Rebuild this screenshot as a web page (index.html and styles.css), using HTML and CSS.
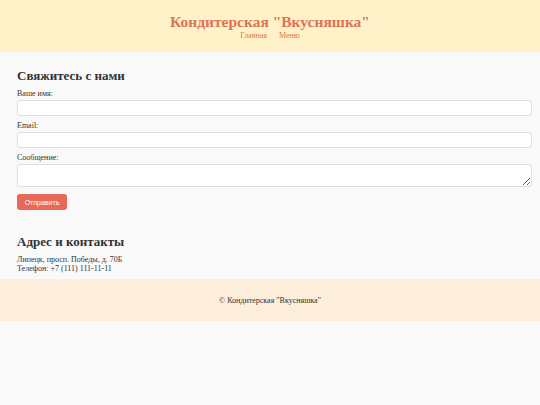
FILE: index.html
```html
<!DOCTYPE html>
<html lang="ru">
<head>
<meta charset="utf-8">
<title>Контакты</title>
<link rel="stylesheet" href="styles.css">
</head>
<body>
<header class="site-header">
  <h1 class="site-title">Кондитерская "Вкусняшка"</h1>
  <nav class="nav">
    <a href="#" class="nav-link">Главная</a>
    <a href="#" class="nav-link">Меню</a>
  </nav>
</header>
<main class="content">
  <section class="contact">
    <h2 class="section-title">Свяжитесь с нами</h2>
    <form class="form">
      <label class="label">Ваше имя:</label>
      <input class="field" type="text">
      <label class="label">Email:</label>
      <input class="field" type="email">
      <label class="label">Сообщение:</label>
      <textarea class="field area"></textarea>
      <button class="btn" type="button">Отправить</button>
    </form>
  </section>
  <section class="address">
    <h2 class="section-title">Адрес и контакты</h2>
    <p class="info">Липецк, просп. Победы, д. 70Б<br>Телефон: +7 (111) 111-11-11</p>
  </section>
</main>
<footer class="site-footer">
  <p class="copy">© Кондитерская "Вкусняшка"</p>
</footer>
</body>
</html>
```
FILE: styles.css
```css
html, body {
  margin: 0;
  padding: 0;
  background: #f9f9f9;
  font-family: "Liberation Serif", "DejaVu Serif", serif;
  color: #333;
}
.site-header {
  background: #fff2c8;
  height: 52px;
  display: flex;
  flex-direction: column;
  align-items: center;
  padding-top: 12px;
  box-sizing: border-box;
}
.site-title {
  margin: 0;
  font-size: 15.5px;
  line-height: 19px;
  color: #e07254;
  font-weight: bold;
}
.nav {
  display: flex;
  gap: 12px;
  line-height: 9px;
}
.nav-link {
  font-size: 8px;
  color: #e07254;
  text-decoration: none;
}
.content {
  padding: 15px 8px 0 17px;
}
.section-title {
  margin: 0 0 5px;
  font-size: 13px;
  line-height: 17px;
  font-weight: bold;
  color: #333;
}
.form {
  display: flex;
  flex-direction: column;
  align-items: flex-start;
}
.label {
  font-size: 8px;
  line-height: 9px;
  margin-bottom: 2px;
  color: #333;
}
.field {
  width: 100%;
  box-sizing: border-box;
  height: 16px;
  border: 1px solid #ddd;
  border-radius: 3px;
  background: #fff;
  margin: 0 0 5px;
  padding: 2px 4px;
  font-family: inherit;
}
.area {
  height: 23px;
  resize: vertical;
  margin-bottom: 7px;
}
.btn {
  width: 50px;
  height: 16px;
  border: none;
  border-radius: 3px;
  background: #e8695a;
  color: #fff;
  font-family: "Liberation Sans", Arial, sans-serif;
  font-size: 7px;
  padding: 0;
}
.address {
  margin-top: 23px;
}
.address .section-title {
  margin-bottom: 5px;
}
.info {
  margin: 0;
  font-size: 8px;
  line-height: 9px;
  color: #333;
}
.site-footer {
  margin-top: 6px;
  background: #fdeedc;
  height: 42px;
  display: flex;
  align-items: center;
  justify-content: center;
}
.copy {
  margin: 0;
  font-size: 8px;
  color: #333;
}
```
